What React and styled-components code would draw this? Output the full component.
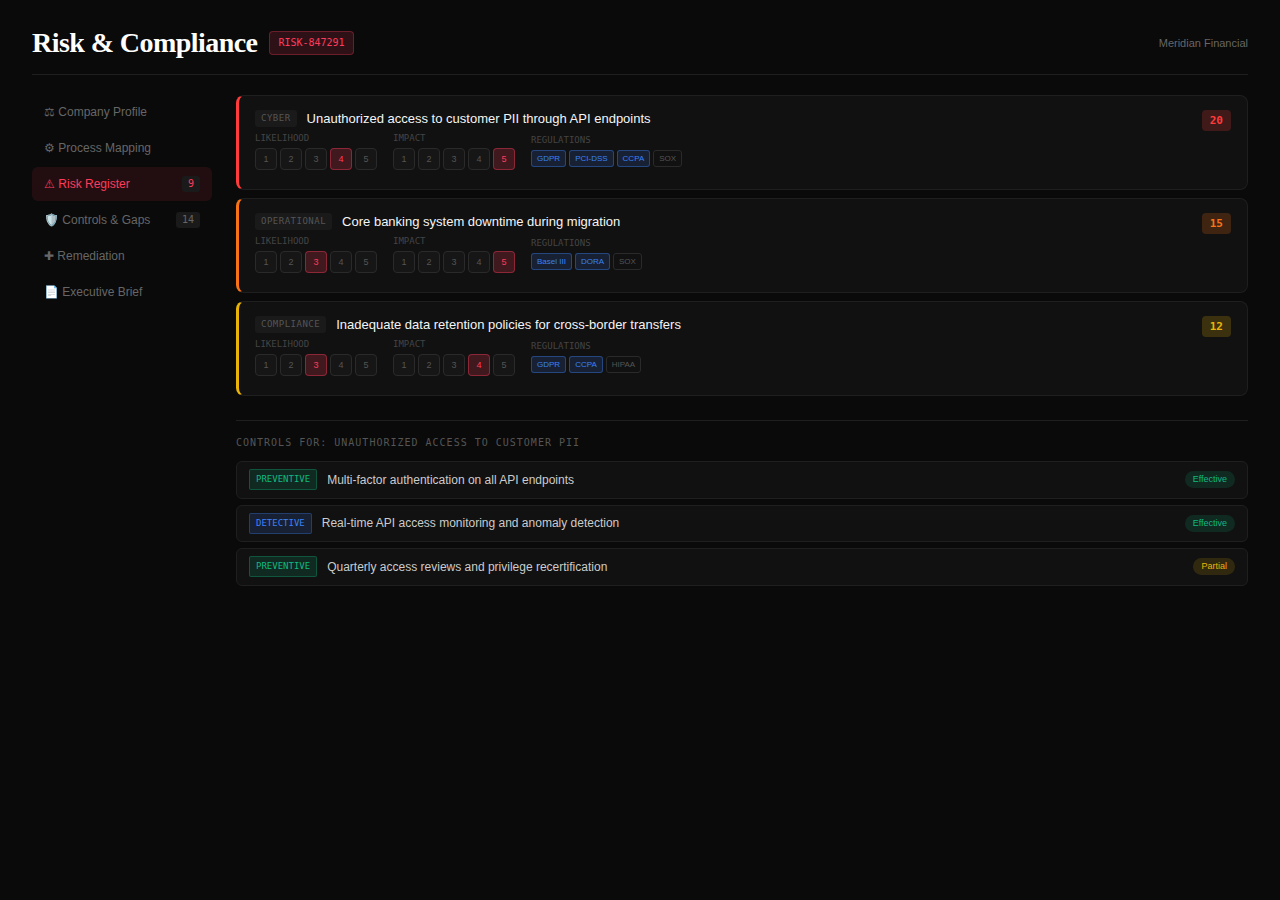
import React from 'react';
import styled, { createGlobalStyle } from 'styled-components';

const Global = createGlobalStyle`
  html, body { margin: 0; padding: 0; background: #0a0a0a; }
  body { font-family: "Liberation Sans", Arial, sans-serif; min-height: 900px; }
  * { box-sizing: border-box; }
`;
const mono = `"DejaVu Sans Mono", "Liberation Mono", monospace`;

const Page = styled.div`padding: 24px 32px 32px;`;
const Header = styled.header`
  display: flex; align-items: center; justify-content: space-between;
  height: 51px; padding-bottom: 13px; border-bottom: 1px solid #1f1f1f; margin-bottom: 20px;
`;
const TitleRow = styled.div`display: flex; align-items: center; gap: 12px;`;
const Title = styled.h1`
  margin: 0; font: 700 28px/1.2 "Liberation Serif", serif; color: #fff; letter-spacing: -0.56px;
`;
const RiskId = styled.span`
  font: 10px/1.2 ${mono}; color: #ff3b5c; background: rgba(255,59,92,.15);
  border: 1px solid rgba(255,59,92,.3); border-radius: 4px; padding: 5px 8px;
`;
const Org = styled.span`font-size: 11px; color: #666;`;
const Layout = styled.div`display: grid; grid-template-columns: 180px 1fr; gap: 24px;`;
const Nav = styled.nav`display: flex; flex-direction: column; gap: 2px;`;
const NavItem = styled.div`
  display: flex; align-items: center; justify-content: space-between; height: 34px; padding: 0 12px;
  border-radius: 6px; font-size: 12px; color: ${p => p.$active ? '#ff3b5c' : '#666'};
  background: ${p => p.$active ? 'rgba(255,59,92,.1)' : 'transparent'};
`;
const NavBadge = styled.span`
  font: 10px/1.2 ${mono}; background: #1a1a1a; border-radius: 3px; padding: 2px 6px;
  color: ${p => p.$active ? '#ff3b5c' : '#666'};
`;
const Main = styled.main`display: flex; flex-direction: column; gap: 8px;`;
const Card = styled.article`
  display: flex; justify-content: space-between; align-items: flex-start; height: 95px;
  padding: 14px 16px; background: #111; border: 1px solid #1f1f1f;
  border-left: 3px solid ${p => p.$c}; border-radius: 8px;
`;
const CardBody = styled.div`display: flex; flex-direction: column; gap: 6px;`;
const CardHead = styled.div`display: flex; align-items: center; gap: 10px;`;
const Category = styled.span`
  font: 9px/1.2 ${mono}; color: #555; background: #1a1a1a; border-radius: 3px; padding: 3px 6px;
  letter-spacing: .5px; text-transform: uppercase;
`;
const RiskTitle = styled.h3`margin: 0; font-size: 13px; font-weight: 500; color: #f5f5f5; line-height: 1.2;`;
const Meters = styled.div`display: flex; gap: 16px; align-items: flex-start;`;
const Meter = styled.div`display: flex; flex-direction: column; gap: 4px;`;
const RegMeter = styled(Meter)`padding-top: 2px;`;
const MLabel = styled.div`font: 9px/1.2 ${mono}; color: #444; text-transform: uppercase;`;
const Dots = styled.div`display: flex; gap: 3px;`;
const Dot = styled.span`
  width: 22px; height: 22px; display: flex; align-items: center; justify-content: center; border-radius: 4px;
  font-size: 9px; color: ${p => p.$on ? '#ff3b5c' : '#555'};
  background: ${p => p.$on ? 'rgba(255,59,92,.2)' : '#161616'};
  border: 1px solid ${p => p.$on ? 'rgba(255,59,92,.4)' : '#2a2a2a'};
`;
const Regs = styled.div`display: flex; gap: 3px;`;
const Reg = styled.span`
  font-size: 8px; line-height: 1.2; padding: 3px 5px; border-radius: 3px;
  color: ${p => p.$on ? '#3b82f6' : '#555'};
  background: ${p => p.$on ? 'rgba(59,130,246,.15)' : 'transparent'};
  border: 1px solid ${p => p.$on ? 'rgba(59,130,246,.4)' : '#2a2a2a'};
`;
const Score = styled.span`
  font: 700 11px/1.2 ${mono}; color: ${p => p.$c}; background: ${p => p.$bg}; border-radius: 4px; padding: 4px 8px;
`;
const Controls = styled.section`
  margin-top: 16px; padding-top: 16px; border-top: 1px solid #1f1f1f; display: flex; flex-direction: column; gap: 6px;
`;
const CTitle = styled.div`
  font: 10px/1.2 ${mono}; color: #555; letter-spacing: 1px; text-transform: uppercase; margin-bottom: 6px;
`;
const Row = styled.div`
  display: flex; align-items: center; gap: 10px; height: 37.5px; padding: 0 12px;
  background: #111; border: 1px solid #1f1f1f; border-radius: 6px;
`;
const Type = styled.span`
  font: 9px/1.2 ${mono}; padding: 4px 6px; border-radius: 2px;
  color: ${p => p.$c}; background: ${p => p.$bg}; border: 1px solid ${p => p.$bd};
`;
const CText = styled.span`flex: 1; font-size: 12px; color: #ccc;`;
const Status = styled.span`
  font-size: 9px; line-height: 1.2; border-radius: 10px; padding: 3px 8px;
  color: ${p => p.$c}; background: ${p => p.$bg};
`;

const risks = [
  { cat: 'Cyber', title: 'Unauthorized access to customer PII through API endpoints', c: '#ff3b3b', l: 4, i: 5, s: 20, sc: '#ff3b3b', sb: 'rgba(255,59,59,.2)', regs: [['GDPR',1],['PCI-DSS',1],['CCPA',1],['SOX',0]] },
  { cat: 'Operational', title: 'Core banking system downtime during migration', c: '#f97316', l: 3, i: 5, s: 15, sc: '#f97316', sb: 'rgba(249,115,22,.2)', regs: [['Basel III',1],['DORA',1],['SOX',0]] },
  { cat: 'Compliance', title: 'Inadequate data retention policies for cross-border transfers', c: '#eab308', l: 3, i: 4, s: 12, sc: '#eab308', sb: 'rgba(234,179,8,.2)', regs: [['GDPR',1],['CCPA',1],['HIPAA',0]] },
];
const green = { c: '#10b981', bg: 'rgba(16,185,129,.15)', bd: 'rgba(16,185,129,.3)' };
const blue = { c: '#3b82f6', bg: 'rgba(59,130,246,.15)', bd: 'rgba(59,130,246,.3)' };
const controls = [
  { t: 'PREVENTIVE', k: green, x: 'Multi-factor authentication on all API endpoints', s: 'Effective', sc: '#10b981', sb: 'rgba(16,185,129,.15)' },
  { t: 'DETECTIVE', k: blue, x: 'Real-time API access monitoring and anomaly detection', s: 'Effective', sc: '#10b981', sb: 'rgba(16,185,129,.15)' },
  { t: 'PREVENTIVE', k: green, x: 'Quarterly access reviews and privilege recertification', s: 'Partial', sc: '#eab308', sb: 'rgba(234,179,8,.15)' },
];
const nav = [
  ['⚖ Company Profile'], ['⚙ Process Mapping'], ['⚠ Risk Register', 9, true], ['🛡️ Controls & Gaps', 14], ['✚ Remediation'], ['📄 Executive Brief'],
];

const Scale = ({ label, on }) => (
  <Meter>
    <MLabel>{label}</MLabel>
    <Dots>{[1,2,3,4,5].map(n => <Dot key={n} $on={n === on}>{n}</Dot>)}</Dots>
  </Meter>
);

export default function App() {
  return (
    <Page>
      <Global />
      <Header>
        <TitleRow><Title>Risk &amp; Compliance</Title><RiskId>RISK-847291</RiskId></TitleRow>
        <Org>Meridian Financial</Org>
      </Header>
      <Layout>
        <Nav>
          {nav.map(([t, b, a]) => (
            <NavItem key={t} $active={a}><span>{t}</span>{b && <NavBadge $active={a}>{b}</NavBadge>}</NavItem>
          ))}
        </Nav>
        <Main>
          {risks.map(r => (
            <Card key={r.cat} $c={r.c}>
              <CardBody>
                <CardHead><Category>{r.cat}</Category><RiskTitle>{r.title}</RiskTitle></CardHead>
                <Meters>
                  <Scale label="Likelihood" on={r.l} />
                  <Scale label="Impact" on={r.i} />
                  <RegMeter>
                    <MLabel>Regulations</MLabel>
                    <Regs>{r.regs.map(([n, on]) => <Reg key={n} $on={on}>{n}</Reg>)}</Regs>
                  </RegMeter>
                </Meters>
              </CardBody>
              <Score $c={r.sc} $bg={r.sb}>{r.s}</Score>
            </Card>
          ))}
          <Controls>
            <CTitle>Controls for: Unauthorized access to customer PII</CTitle>
            {controls.map(c => (
              <Row key={c.x}>
                <Type $c={c.k.c} $bg={c.k.bg} $bd={c.k.bd}>{c.t}</Type>
                <CText>{c.x}</CText>
                <Status $c={c.sc} $bg={c.sb}>{c.s}</Status>
              </Row>
            ))}
          </Controls>
        </Main>
      </Layout>
    </Page>
  );
}
